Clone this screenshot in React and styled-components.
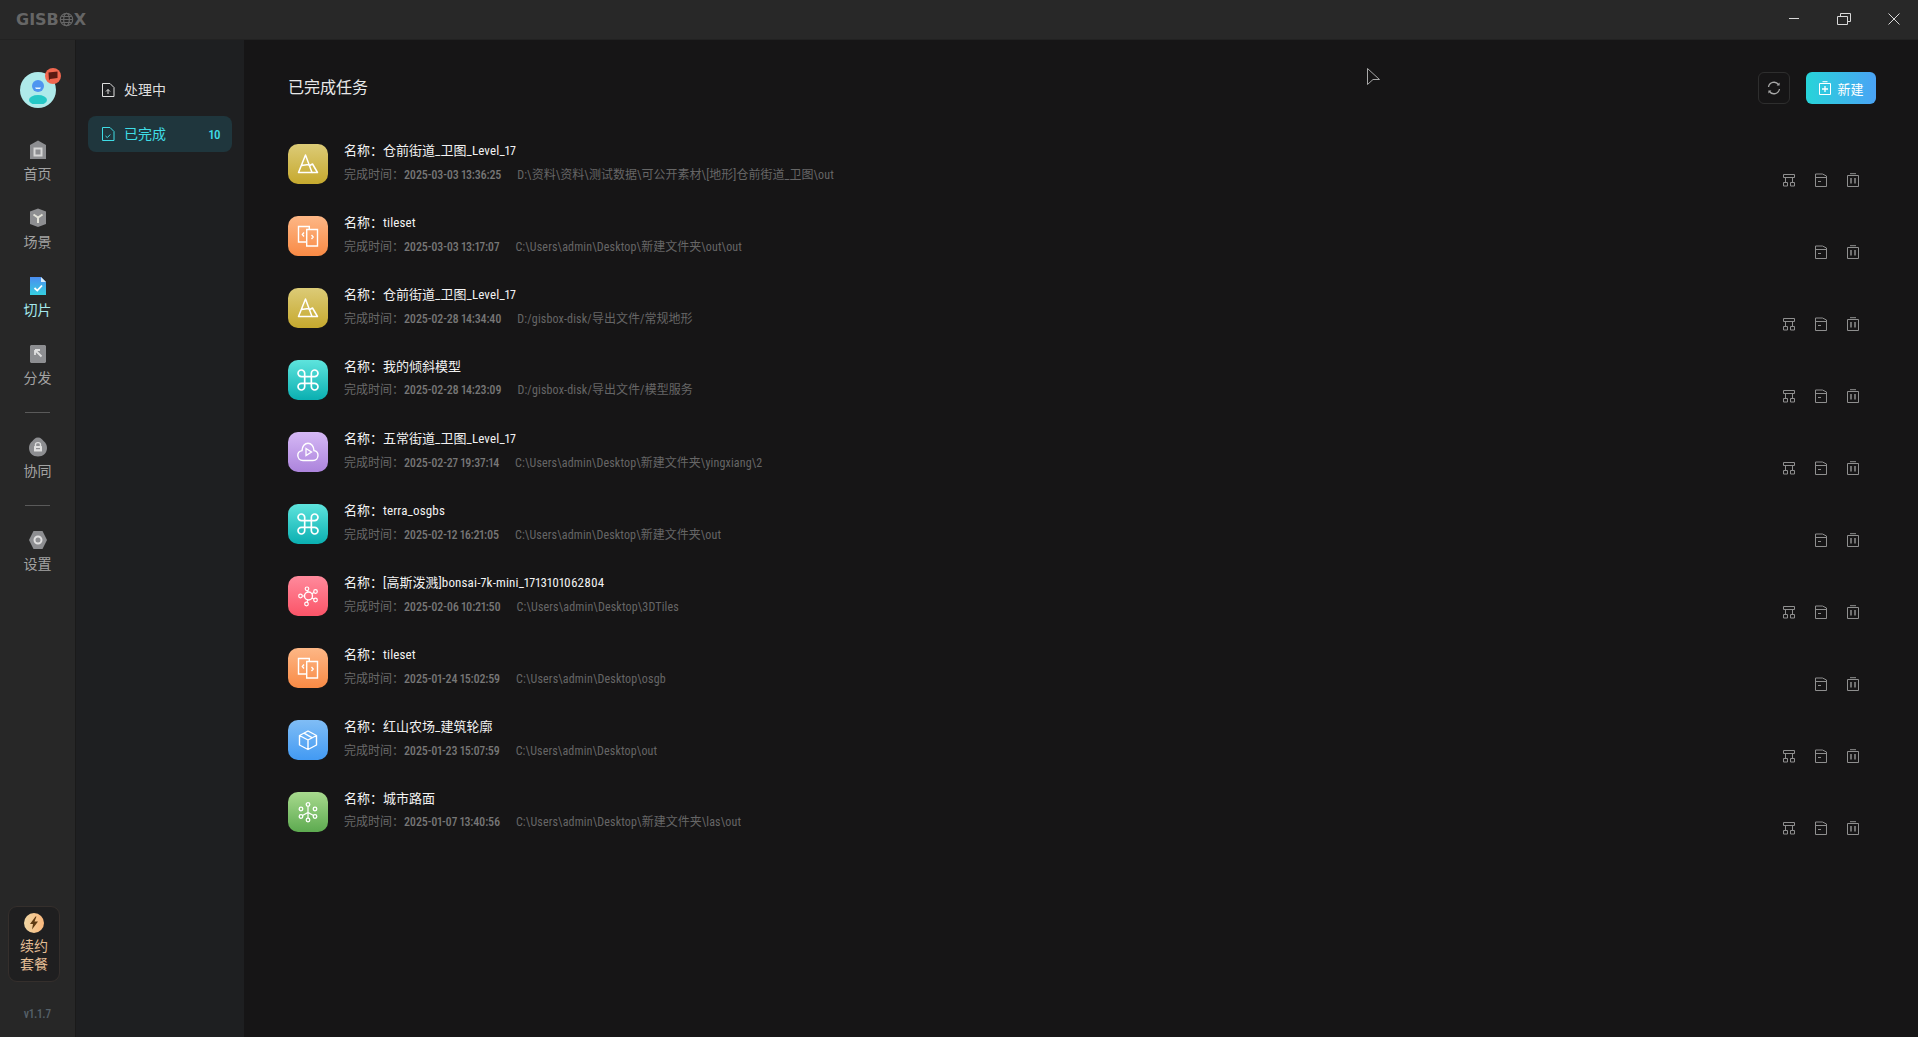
import React from 'react';
import styled, { createGlobalStyle } from 'styled-components';

const Global = createGlobalStyle`
  html, body { margin: 0; padding: 0; height: 100%; background: #161516; overflow: hidden; }
  #root { height: 100%; }
  * { box-sizing: border-box; }
  svg { display: block; }
`;

const CJK = `"Noto Sans CJK SC", "Liberation Sans", sans-serif`;

const Page = styled.div`
  width: 1918px;
  height: 1037px;
  display: flex;
  flex-direction: column;
  position: relative;
  font-family: ${CJK};
`;

const TitleBar = styled.header`
  height: 40px;
  flex: none;
  background: #282828;
  border-bottom: 1px solid #222222;
  display: flex;
  align-items: center;
  justify-content: space-between;
  padding-left: 16px;
`;

const Logo = styled.div`
  display: flex;
  align-items: center;
  font-family: "DejaVu Sans", sans-serif;
  font-weight: 700;
  font-size: 16px;
  color: #666666;
`;

const WinButtons = styled.div`
  display: flex;
  margin-right: -1px;
`;

const WinButton = styled.button`
  width: 50px;
  height: 39px;
  background: none;
  border: 0;
  padding: 12px 0 0;
  display: flex;
  align-items: flex-start;
  justify-content: center;
`;

const Body = styled.div`
  flex: 1;
  display: flex;
  min-height: 0;
`;

const Rail = styled.nav`
  width: 76px;
  flex: none;
  background: #272727;
  border-right: 1px solid #1a1a1a;
  display: flex;
  flex-direction: column;
  align-items: center;
  padding-top: 32px;
`;

const Avatar = styled.div`
  width: 36px;
  height: 36px;
  flex: none;
  border-radius: 50%;
  background: #aeeaea;
  position: relative;
  margin-bottom: 32px;
  display: flex;
  align-items: center;
  justify-content: center;
`;

const Badge = styled.span`
  position: absolute;
  top: -4px;
  right: -5px;
  width: 16px;
  height: 16px;
  border-radius: 50%;
  background: #f1674f;
  display: flex;
  align-items: center;
  justify-content: center;
`;

const RailItem = styled.div`
  height: 68px;
  flex: none;
  display: flex;
  flex-direction: column;
  align-items: center;
  gap: 3px;
  font-size: 14px;
  line-height: 20px;
  color: ${({ $active }) => ($active ? '#a5e9ee' : '#a3a3a3')};
`;

const RailIcon = styled.div`
  width: 20px;
  height: 20px;
`;

const RailDivider = styled.div`
  width: 25px;
  height: 1px;
  flex: none;
  background: #5a5a5a;
  margin-bottom: 24px;
`;

const Renew = styled.div`
  margin-top: auto;
  align-self: flex-start;
  margin-left: 8px;
  width: 52px;
  height: 76px;
  border: 1px solid #352f2c;
  border-radius: 9px;
  background: #1f1f20;
  display: flex;
  flex-direction: column;
  align-items: center;
  padding-top: 6px;
  font-size: 14px;
  line-height: 18px;
  text-align: center;
  color: #e3bd95;
`;

const RenewText = styled.span`
  margin-top: 3px;
`;

const Version = styled.div`
  font-family: Roboto, sans-serif;
  font-size: 12px;
  font-weight: 500;
  font-stretch: 75%;
  font-variant-numeric: proportional-nums;
  line-height: 16px;
  color: #56616a;
  margin: 24px 0 15px;
`;

const SubNav = styled.aside`
  width: 168px;
  flex: none;
  background: #1e1f21;
  padding: 32px 12px 0;
  display: flex;
  flex-direction: column;
`;

const SubItem = styled.div`
  height: 36px;
  flex: none;
  margin-bottom: 8px;
  padding: 0 12px 0 13px;
  border-radius: 8px;
  display: flex;
  align-items: center;
  gap: 9px;
  font-size: 14px;
  background: ${({ $active }) => ($active ? '#1f363d' : 'transparent')};
  color: ${({ $active }) => ($active ? '#3fdde6' : '#dedede')};
`;

const SubLabel = styled.span`
  margin-top: -2px;
`;

const Count = styled.span`
  margin-left: auto;
  font-family: Roboto, sans-serif;
  font-weight: 500;
  font-size: 13px;
  letter-spacing: -0.6px;
  font-stretch: 75%;
`;

const Main = styled.main`
  flex: 1;
  background: #161516;
  padding: 32px 42px 0 44px;
  min-width: 0;
`;

const Head = styled.div`
  height: 32px;
  display: flex;
  align-items: center;
  margin-bottom: 40px;
`;

const Title = styled.h1`
  margin: 0 auto 0 0;
  padding-bottom: 4px;
  font-size: 16px;
  font-weight: 400;
  color: #e8e8e8;
`;

const RefreshButton = styled.button`
  width: 32px;
  height: 32px;
  padding: 0;
  border: 1px solid #2e2e2e;
  border-radius: 6px;
  background: none;
  display: flex;
  align-items: center;
  justify-content: center;
`;

const NewButton = styled.button`
  width: 70px;
  height: 32px;
  margin-left: 16px;
  padding: 0;
  border: 0;
  border-radius: 6px;
  background: linear-gradient(90deg, #27d4d9, #4aa3f5);
  color: #fff;
  font-family: ${CJK};
  font-size: 13px;
  display: flex;
  align-items: center;
  justify-content: center;
  gap: 5px;
`;

const Row = styled.div`
  height: 72px;
  display: flex;
  align-items: flex-start;
`;

const Tile = styled.div`
  width: 40px;
  height: 40px;
  flex: none;
  border-radius: 10px;
  background: linear-gradient(180deg, ${({ $from }) => $from}, ${({ $to }) => $to});
  display: flex;
  align-items: center;
  justify-content: center;
  margin-right: 16px;
`;

const Info = styled.div`
  flex: 1;
  min-width: 0;
`;

const Name = styled.div`
  font-size: 13px;
  line-height: 18px;
  margin-top: -3px;
  color: #f2f2f2;
`;

const Meta = styled.div`
  display: flex;
  font-size: 12px;
  line-height: 18px;
  margin-top: 5px;
  color: #696969;
`;

const MetaDate = styled.span`
  color: #777777;
`;

const MetaPath = styled.span`
  margin-left: 16px;
  color: #666666;
`;

const Latin = styled.span`
  font-family: Roboto, sans-serif;
  font-size: ${({ $size }) => $size || 12}px;
  font-stretch: 75%;
  font-weight: ${({ $weight }) => $weight || 500};
  font-variant-numeric: proportional-nums;
  letter-spacing: ${({ $spacing }) => $spacing ?? -0.15}px;
`;

const Actions = styled.div`
  display: flex;
  gap: 18px;
  margin: 29px 16px 0 0;
`;

const ActionSlot = styled.span`
  width: 14px;
  height: 14px;
  display: block;
`;

const Cursor = styled.svg`
  position: absolute;
  left: 1367px;
  top: 68px;
`;

// splits a string so ascii runs get the narrow latin face
const Mixed = ({ text, ...latin }) =>
  text.split(/([\x00-\x7f]+)/).map((part, i) =>
    /^[\x00-\x7f]+$/.test(part) ? <Latin key={i} {...latin}>{part}</Latin> : part
  );

const Svg = ({ size = 20, children, ...rest }) => (
  <svg width={size} height={size} viewBox={`0 0 ${size} ${size}`} fill="none" {...rest}>
    {children}
  </svg>
);

const HomeIcon = () => (
  <Svg>
    <path d="M10 0.5 L18 5 V19 H2 V5 Z" fill="#8d8e91" />
    <rect x="6.5" y="8.5" width="7" height="7" fill="none" stroke="#d6d6d6" strokeWidth="2" />
  </Svg>
);
const SceneIcon = () => (
  <Svg>
    <path d="M10 0.5 L18 3.5 V16 L10 19 L2 16 V3.5 Z" fill="#8d8e91" />
    <path d="M5.5 6.5 L10 9.5 L14.5 6.5 M10 9.5 V15" stroke="#e2e2d8" strokeWidth="2" />
  </Svg>
);
const SliceIcon = () => (
  <Svg>
    <defs>
      <linearGradient id="slice" x1="0" y1="0" x2="0" y2="1">
        <stop offset="0" stopColor="#4b8df0" />
        <stop offset="1" stopColor="#35cfe0" />
      </linearGradient>
    </defs>
    <path d="M2 1 H13 L18 6 V19 H2 Z" fill="url(#slice)" />
    <path d="M13 1 L18 6 H13 Z" fill="#d8ecfa" />
    <path d="M6.5 12 L9.3 14.6 L14 9.5" stroke="#fff" strokeWidth="1.8" />
  </Svg>
);
const PublishIcon = () => (
  <Svg>
    <path d="M3 1 H17 L18 2 V18 L17 19 H3 L2 18 V2 Z" fill="#8d8e91" />
    <path d="M7 6 H12 M7 6 V11 M7 6 L13.5 12.5" stroke="#e0e0e0" strokeWidth="1.8" />
  </Svg>
);
const TeamIcon = () => (
  <Svg>
    <path d="M10 0.5 C13 0.5 14 2.5 15.5 4 C18 6 19 8 19 11 C19 16 15 19.5 10 19.5 C5 19.5 1 16 1 11 C1 8 2 6 4.5 4 C6 2.5 7 0.5 10 0.5 Z" fill="#8d8e91" />
    <path d="M7.5 9 V7.5 C7.5 5 12.5 5 12.5 7.5 V9" stroke="#e0e0e0" strokeWidth="1.4" />
    <rect x="6" y="9" width="8" height="5.5" rx="0.5" fill="#e0e0e0" />
    <rect x="8" y="11" width="4" height="1.2" fill="#8d8e91" />
  </Svg>
);
const SettingIcon = () => (
  <Svg>
    <path d="M5.5 1 H14.5 L19 10 L14.5 19 H5.5 L1 10 Z" fill="#8d8e91" />
    <circle cx="10" cy="10" r="3.5" stroke="#e0e0e0" strokeWidth="2" />
  </Svg>
);

const Bolt = () => (
  <Svg size={20}>
    <defs>
      <linearGradient id="gold" x1="0" y1="0" x2="1" y2="0">
        <stop offset="0" stopColor="#efd6a4" />
        <stop offset="1" stopColor="#fbb87c" />
      </linearGradient>
    </defs>
    <circle cx="10" cy="10" r="10" fill="url(#gold)" />
    <path d="M11.5 3.5 L6 11 H9 L8 16.5 L14 8.5 H10.5 L12.5 3.5 Z" fill="#5e3a12" />
  </Svg>
);

const FileUp = () => (
  <Svg size={14}>
    <path d="M1.5 0.5 H9 L13 4.5 V13.5 H1.5 Z" stroke="#dedede" />
    <path d="M7 11 V6.5 M5 8.5 L7 6.5 L9 8.5" stroke="#dedede" />
  </Svg>
);
const FileDone = () => (
  <Svg size={14}>
    <path d="M1.5 0.5 H9 L13 4.5 V13.5 H1.5 Z" stroke="#3fdde6" />
    <path d="M4.5 9 L6.3 10.6 L9.3 7.5" stroke="#3fdde6" />
  </Svg>
);

const RefreshIcon = () => (
  <Svg size={14}>
    <path d="M1.5 6 A5.6 5.6 0 0 1 11.5 3.5 M12.5 8 A5.6 5.6 0 0 1 2.5 10.5" stroke="#a8a8a8" strokeWidth="1.3" />
    <path d="M12.6 1.6 V4.6 H9.6 Z M1.4 12.4 V9.4 H4.4 Z" fill="#a8a8a8" />
  </Svg>
);
const NewIcon = () => (
  <Svg size={14}>
    <path d="M1.5 2.5 H12.5 V13.5 H1.5 Z M4.5 0.7 H9.5" stroke="#fff" />
    <path d="M7 5 V11 M4 8 H10" stroke="#fff" strokeWidth="1.3" />
  </Svg>
);

const TreeIcon = () => (
  <Svg size={14}>
    <path d="M1.5 1.5 H12.5 V4.5 H1.5 Z M1.5 9.5 H5.5 V13 H1.5 Z M8.5 9.5 H12.5 V13 H8.5 Z M3.5 4.5 V9.5 M10.5 4.5 V9.5" stroke="#8f8f8f" />
  </Svg>
);
const FolderIcon = () => (
  <Svg size={14}>
    <path d="M1.5 13.5 V1 H8.5 L12.5 3 V13.5 Z M1.5 4.5 H12.5" stroke="#8f8f8f" />
    <path d="M4 8.5 H7" stroke="#8f8f8f" />
  </Svg>
);
const TrashIcon = () => (
  <Svg size={14}>
    <path d="M1.5 2.5 H12.5 V13.5 H1.5 Z M4 0.7 H10" stroke="#8f8f8f" />
    <path d="M5 5 V10.5 M9 5 V10.5" stroke="#8f8f8f" strokeWidth="1.5" />
  </Svg>
);

const Terrain = () => (
  <Svg size={24}>
    <path d="M9.5 3 L2.5 20.5 H16 Z M5.5 13.5 L12.5 12.5" stroke="#fff" strokeWidth="1.5" strokeLinejoin="round" />
    <path d="M12.8 14 L16.5 12 L21.5 20.5 H16" stroke="#fff" strokeWidth="1.5" strokeLinejoin="round" />
  </Svg>
);
const Tiles = () => (
  <Svg size={24}>
    <path d="M13.3 5 V2.5 H2.5 V18 H10.7" stroke="#fff" strokeWidth="1.4" />
    <path d="M10.7 5.5 H21.5 V22 H10.7 Z" stroke="#fff" strokeWidth="1.4" />
    <path d="M8 8.5 L6.3 10.5 L8 12.5 M15.5 11 L17.2 13 L15.5 15" stroke="#fff" strokeWidth="1.3" />
  </Svg>
);
const Drone = () => (
  <Svg size={24}>
    <g transform="translate(-1.3 -1.3) scale(1.11)">
      <path d="M15 6v12a3 3 0 1 0 3-3H6a3 3 0 1 0 3 3V6a3 3 0 1 0-3 3h12a3 3 0 1 0-3-3" stroke="#fff" strokeWidth="1.5" />
    </g>
  </Svg>
);
const CloudPlay = () => (
  <Svg size={24}>
    <path d="M7 20.5 C3.7 20.5 1.8 18 1.8 15.3 C1.8 12.7 3.6 11 6 10.6 C6.2 6.2 8.8 3.2 12 3.2 C15.2 3.2 17.8 6.2 18 10.6 C20.4 11 22 12.7 22 15.3 C22 18 20.2 20.5 17 20.5 Z" stroke="#fff" strokeWidth="1.4" />
    <path d="M10 8.5 L15.5 12 L10 15.5 Z" stroke="#fff" strokeWidth="1.3" />
  </Svg>
);
const Splat = () => (
  <Svg size={24}>
    <circle cx="12.5" cy="12" r="4" stroke="#fff" strokeWidth="1.4" />
    <circle cx="11" cy="4.8" r="1.8" stroke="#fff" strokeWidth="1.2" />
    <circle cx="19.5" cy="7.5" r="1.8" stroke="#fff" strokeWidth="1.2" />
    <circle cx="19.5" cy="16" r="1.8" stroke="#fff" strokeWidth="1.2" />
    <circle cx="4.5" cy="12" r="1.8" stroke="#fff" strokeWidth="1.2" />
    <circle cx="10.5" cy="20" r="1.8" stroke="#fff" strokeWidth="1.2" />
    <path d="M11.5 6.5 L12 8 M17.9 8.5 L15.8 9.7 M17.9 15 L15.8 14 M6.3 12 H8.5 M11 18.2 L11.8 16" stroke="#fff" strokeWidth="1.1" />
  </Svg>
);
const Cube = () => (
  <Svg size={24}>
    <path d="M12 3 L20.5 7.5 V17 L12 21.5 L3.5 17 V7.5 Z M3.5 7.5 L12 12 L20.5 7.5 M12 12 V21.5 M8 5.2 L16.3 9.8" stroke="#fff" strokeWidth="1.4" strokeLinejoin="round" />
  </Svg>
);
const Nodes = () => (
  <Svg size={24}>
    <circle cx="12" cy="4.5" r="1.8" stroke="#fff" strokeWidth="1.3" />
    <circle cx="5" cy="9" r="1.8" stroke="#fff" strokeWidth="1.3" />
    <circle cx="19" cy="9" r="1.8" stroke="#fff" strokeWidth="1.3" />
    <circle cx="5" cy="16.5" r="1.8" stroke="#fff" strokeWidth="1.3" />
    <circle cx="19" cy="16.5" r="1.8" stroke="#fff" strokeWidth="1.3" />
    <circle cx="12" cy="20" r="1.8" stroke="#fff" strokeWidth="1.3" />
    <path d="M12 6.5 V18 M6.5 15.5 L12 12.5 L17.5 15.5" stroke="#fff" strokeWidth="1.2" />
  </Svg>
);

const kinds = {
  terrain: { from: '#dccb77', to: '#c6a92e', Icon: Terrain },
  tiles: { from: '#fdb786', to: '#f98a45', Icon: Tiles },
  drone: { from: '#5ee4dd', to: '#0aafb1', Icon: Drone },
  cloud: { from: '#d5b8f5', to: '#ac84dc', Icon: CloudPlay },
  splat: { from: '#ff8a9c', to: '#fb5468', Icon: Splat },
  cube: { from: '#80bdf5', to: '#429af3', Icon: Cube },
  nodes: { from: '#a8da8e', to: '#5daa50', Icon: Nodes },
};

const tasks = [
  { kind: 'terrain', name: '仓前街道_卫图_Level_17', date: '2025-03-03 13:36:25', path: 'D:\\资料\\资料\\测试数据\\可公开素材\\[地形]仓前街道_卫图\\out', tree: true },
  { kind: 'tiles', name: 'tileset', date: '2025-03-03 13:17:07', path: 'C:\\Users\\admin\\Desktop\\新建文件夹\\out\\out', tree: false },
  { kind: 'terrain', name: '仓前街道_卫图_Level_17', date: '2025-02-28 14:34:40', path: 'D:/gisbox-disk/导出文件/常规地形', tree: true },
  { kind: 'drone', name: '我的倾斜模型', date: '2025-02-28 14:23:09', path: 'D:/gisbox-disk/导出文件/模型服务', tree: true },
  { kind: 'cloud', name: '五常街道_卫图_Level_17', date: '2025-02-27 19:37:14', path: 'C:\\Users\\admin\\Desktop\\新建文件夹\\yingxiang\\2', tree: true },
  { kind: 'drone', name: 'terra_osgbs', date: '2025-02-12 16:21:05', path: 'C:\\Users\\admin\\Desktop\\新建文件夹\\out', tree: false },
  { kind: 'splat', name: '[高斯泼溅]bonsai-7k-mini_1713101062804', date: '2025-02-06 10:21:50', path: 'C:\\Users\\admin\\Desktop\\3DTiles', tree: true },
  { kind: 'tiles', name: 'tileset', date: '2025-01-24 15:02:59', path: 'C:\\Users\\admin\\Desktop\\osgb', tree: false },
  { kind: 'cube', name: '红山农场_建筑轮廓', date: '2025-01-23 15:07:59', path: 'C:\\Users\\admin\\Desktop\\out', tree: true },
  { kind: 'nodes', name: '城市路面', date: '2025-01-07 13:40:56', path: 'C:\\Users\\admin\\Desktop\\新建文件夹\\las\\out', tree: true },
];

const App = () => (
  <Page>
    <Global />
    <TitleBar>
      <Logo>
        GISB
        <svg width="15" height="15" viewBox="0 0 15 15" fill="none" stroke="#666666" strokeWidth="1.2">
          <circle cx="7.5" cy="7.5" r="6.2" />
          <ellipse cx="7.5" cy="7.5" rx="2.8" ry="6.2" />
          <path d="M1.3 7.5 H13.7 M2.3 4.5 H12.7 M2.3 10.5 H12.7" />
        </svg>
        X
      </Logo>
      <WinButtons>
        <WinButton>
          <Svg size={14}><path d="M2 6.5 H12" stroke="#d8d8d8" /></Svg>
        </WinButton>
        <WinButton>
          <Svg size={16}><path d="M1.5 4.5 H11.5 V12.5 H1.5 Z M4.5 4 V1.5 H14.5 V9.5 H12" stroke="#d8d8d8" /></Svg>
        </WinButton>
        <WinButton>
          <Svg size={14}><path d="M1.5 1.5 L12.5 12.5 M12.5 1.5 L1.5 12.5" stroke="#d8d8d8" /></Svg>
        </WinButton>
      </WinButtons>
    </TitleBar>
    <Body>
      <Rail>
        <Avatar>
          <svg width="24" height="28" viewBox="0 0 24 28" fill="none">
            <circle cx="12" cy="10" r="6" fill="#4f95f0" />
            <path d="M9 11.5 H15 L14 13 H10 Z" fill="#e8f5ff" />
            <ellipse cx="12" cy="24" rx="9" ry="5" fill="#25c8c6" />
          </svg>
          <Badge>
            <svg width="10" height="10" viewBox="0 0 10 10">
              <path d="M0.5 1.5 L9.5 0.5 V7 L2 8 L1 9.5 Z" fill="#5b1a12" />
            </svg>
          </Badge>
        </Avatar>
        <RailItem><RailIcon><HomeIcon /></RailIcon>首页</RailItem>
        <RailItem><RailIcon><SceneIcon /></RailIcon>场景</RailItem>
        <RailItem $active><RailIcon><SliceIcon /></RailIcon>切片</RailItem>
        <RailItem><RailIcon><PublishIcon /></RailIcon>分发</RailItem>
        <RailDivider />
        <RailItem><RailIcon><TeamIcon /></RailIcon>协同</RailItem>
        <RailDivider />
        <RailItem><RailIcon><SettingIcon /></RailIcon>设置</RailItem>
        <Renew>
          <Bolt />
          <RenewText>续约<br />套餐</RenewText>
        </Renew>
        <Version>v1.1.7</Version>
      </Rail>
      <SubNav>
        <SubItem><FileUp /><SubLabel>处理中</SubLabel></SubItem>
        <SubItem $active><FileDone /><SubLabel>已完成</SubLabel><Count>10</Count></SubItem>
      </SubNav>
      <Main>
        <Head>
          <Title>已完成任务</Title>
          <RefreshButton><RefreshIcon /></RefreshButton>
          <NewButton><NewIcon />新建</NewButton>
        </Head>
        {tasks.map((task, i) => {
          const { from, to, Icon } = kinds[task.kind];
          return (
            <Row key={i}>
              <Tile $from={from} $to={to}><Icon /></Tile>
              <Info>
                <Name>名称：<Mixed text={task.name} $size={13} $weight={400} $spacing={0.15} /></Name>
                <Meta>
                  完成时间：
                  <MetaDate><Latin>{task.date}</Latin></MetaDate>
                  <MetaPath><Mixed text={task.path} $weight={400} $spacing={0.15} /></MetaPath>
                </Meta>
              </Info>
              <Actions>
                <ActionSlot>{task.tree && <TreeIcon />}</ActionSlot>
                <ActionSlot><FolderIcon /></ActionSlot>
                <ActionSlot><TrashIcon /></ActionSlot>
              </Actions>
            </Row>
          );
        })}
      </Main>
    </Body>
    <Cursor width="14" height="18" viewBox="0 0 14 18" fill="#161516">
      <path d="M0.5 0.5 L12.5 11.5 H6 L0.5 16.5 Z" stroke="#a8a8a8" />
    </Cursor>
  </Page>
);

export default App;
